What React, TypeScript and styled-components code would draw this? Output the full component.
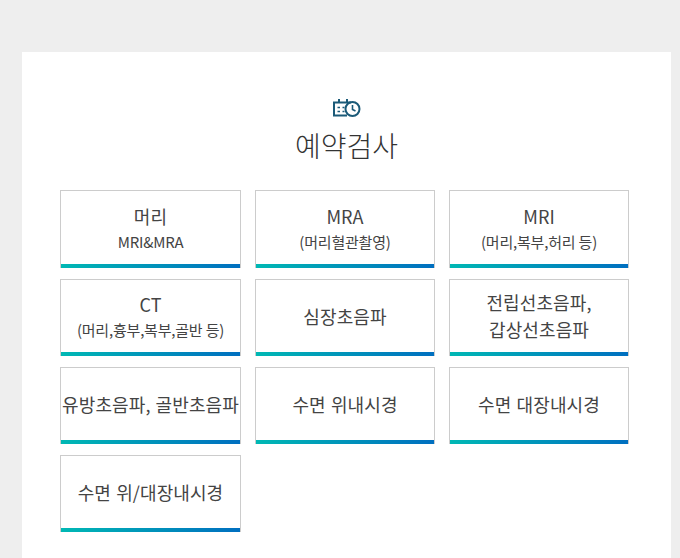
import styled, { createGlobalStyle } from 'styled-components';

const GlobalStyle = createGlobalStyle`
  html, body {
    margin: 0;
    height: 558px;
    overflow: hidden;
    background: #eeeeee;
    font-family: "Noto Sans CJK KR", "Noto Sans", sans-serif;
  }
`;

const Page = styled.div`
  padding: 52px 9px 0 22px;
`;

const Panel = styled.section`
  background: #fff;
  padding: 46px 38px 40px;
`;

const Head = styled.header`
  display: flex;
  flex-direction: column;
  align-items: center;
  margin-bottom: 25.49px;
  svg {
    display: block;
    width: 29px;
    height: 20px;
  }
`;

const Title = styled.h2`
  margin: 7px 0 0;
  font-size: 28px;
  line-height: 40px;
  font-weight: 300;
  color: #333;
`;

const Grid = styled.div`
  display: grid;
  grid-template-columns: 181px 180px 180px;
  column-gap: 14px;
  row-gap: 10.9px;
`;

const Card = styled.a`
  position: relative;
  box-sizing: border-box;
  height: 77.3px;
  border: 1px solid #cccccc;
  padding-bottom: 2px;
  display: flex;
  flex-direction: column;
  align-items: center;
  justify-content: center;
  text-align: center;
  color: #444;
  background: #fff;
  white-space: nowrap;
  &::after {
    content: '';
    position: absolute;
    left: 0;
    right: 0;
    bottom: -1px;
    height: 4px;
    background: linear-gradient(90deg, #00b8b4, #006fc0);
  }
`;

const Name = styled.span`
  font-size: 18px;
  line-height: 27px;
  letter-spacing: 0.1px;
  word-spacing: 1px;
`;

const Sub = styled.span`
  font-size: 15px;
  line-height: 24px;
  letter-spacing: -0.2px;
`;

const items: { name: string[]; sub?: string }[] = [
  { name: ['머리'], sub: 'MRI&MRA' },
  { name: ['MRA'], sub: '(머리혈관촬영)' },
  { name: ['MRI'], sub: '(머리,복부,허리 등)' },
  { name: ['CT'], sub: '(머리,흉부,복부,골반 등)' },
  { name: ['심장초음파'] },
  { name: ['전립선초음파,', '갑상선초음파'] },
  { name: ['유방초음파, 골반초음파'] },
  { name: ['수면 위내시경'] },
  { name: ['수면 대장내시경'] },
  { name: ['수면 위/대장내시경'] },
];

function App() {
  return (
    <Page>
      <GlobalStyle />
      <Panel>
        <Head>
          <svg viewBox="0 0 29 20" fill="none" stroke="#1b5a78" strokeWidth="2">
            <path d="M15 17.5H2V4.5H19" />
            <path d="M7 1v4M15 1v4" />
            <path d="M5.5 9.5h2.5M5.5 13.5h2.5M10.5 9.5h2M10.5 13.5h2" strokeWidth="1.6" />
            <circle cx="20.5" cy="11" r="7" />
            <path d="M20.5 7V11.5l3 1.5" strokeWidth="1.6" />
          </svg>
          <Title>예약검사</Title>
        </Head>
        <Grid>
          {items.map((item) => (
            <Card key={item.name[0]}>
              {item.name.map((line) => (
                <Name key={line}>{line}</Name>
              ))}
              {item.sub && <Sub>{item.sub}</Sub>}
            </Card>
          ))}
        </Grid>
      </Panel>
    </Page>
  );
}

export default App;
